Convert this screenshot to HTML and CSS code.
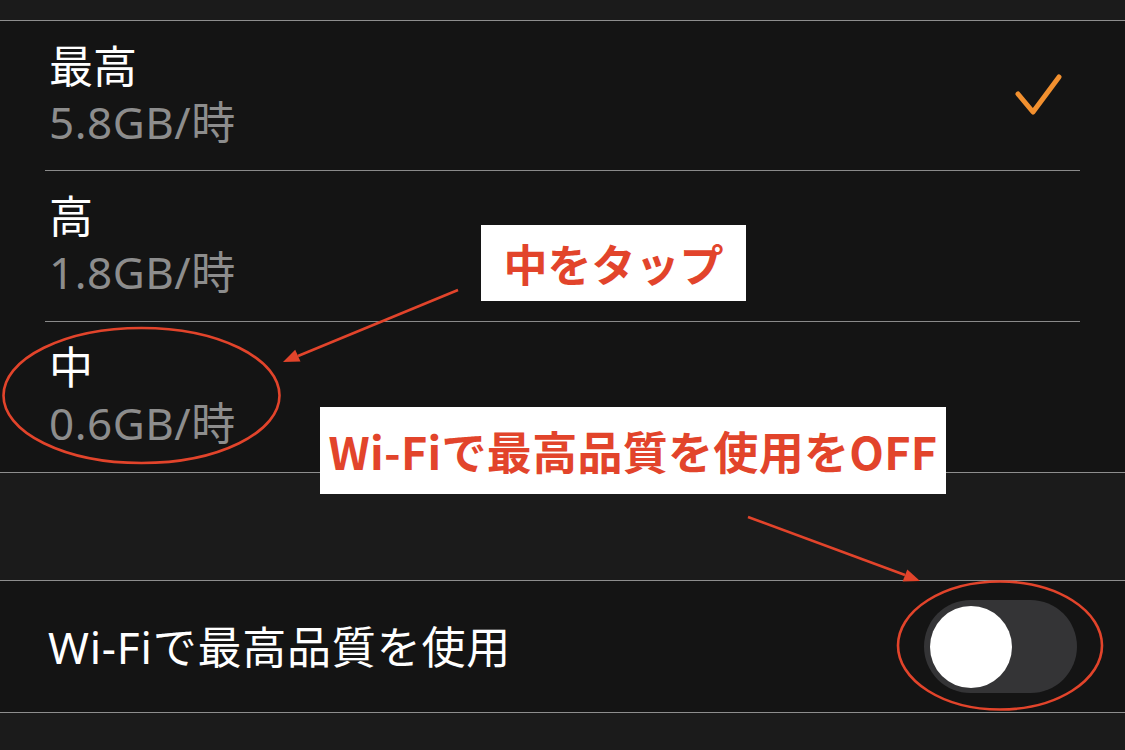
FILE: index.html
```html
<!DOCTYPE html>
<html lang="ja">
<head>
    <meta charset="UTF-8">
    <title>ストリーミング画質</title>
    <link rel="stylesheet" href="styles.css">
</head>
<body>
    <div class="screen">
        <div class="top-gap"></div>

        <div class="quality-list">
            <div class="option">
                <div class="option-text">
                    <div class="option-title">最高</div>
                    <div class="option-sub">5.8GB/時</div>
                </div>
                <svg class="check" width="50" height="50" viewBox="0 0 50 50">
                    <path d="M4 24 L19 42 L45 7" fill="none" stroke="#f2902f" stroke-width="5" stroke-linecap="round" stroke-linejoin="round"/>
                </svg>
            </div>
            <div class="option">
                <div class="option-text">
                    <div class="option-title">高</div>
                    <div class="option-sub">1.8GB/時</div>
                </div>
            </div>
            <div class="option last">
                <div class="option-text">
                    <div class="option-title">中</div>
                    <div class="option-sub">0.6GB/時</div>
                </div>
            </div>
        </div>

        <div class="section-gap"></div>

        <div class="setting-row">
            <span class="setting-label">Wi-Fiで最高品質を使用</span>
            <div class="toggle">
                <div class="knob"></div>
            </div>
        </div>

        <div class="bottom-gap"></div>

        <!-- annotations drawn over the screenshot -->
        <div class="note note-tap">中をタップ</div>
        <div class="note note-off">Wi-Fiで最高品質を使用をOFF</div>

        <svg class="marks" width="1125" height="750" viewBox="0 0 1125 750">
            <g fill="none" stroke="#e2442b" stroke-width="2.6">
                <ellipse cx="141.5" cy="395.5" rx="138" ry="67.5"/>
                <ellipse cx="1000" cy="645.5" rx="102" ry="64"/>
                <line x1="458" y1="290" x2="298" y2="356"/>
                <line x1="748" y1="517" x2="905" y2="575"/>
            </g>
            <g fill="#e2442b">
                <polygon points="283,362 300.5,361.6 295.2,349.8"/>
                <polygon points="920,581 902.6,581.4 907.3,569.4"/>
            </g>
        </svg>
    </div>
</body>
</html>
```

FILE: styles.css
```css
* { margin: 0; padding: 0; box-sizing: border-box; }
body {
    font-family: "Noto Sans", "Noto Sans CJK JP", sans-serif;
    background: #1b1b1b;
    color: #ffffff;
}
.screen {
    position: relative;
    width: 1125px;
    height: 750px;
    overflow: hidden;
    background: #1b1b1b;
}
.top-gap {
    height: 21px;
    border-bottom: 1px solid #8e8e8e;
}
.quality-list {
    background: #141414;
    border-bottom: 1px solid #8e8e8e;
}
.option {
    display: flex;
    align-items: center;
    justify-content: space-between;
    height: 151px;
    margin: 0 45px;
    padding: 0 0 0 4px;
    border-bottom: 1px solid #8a8a8a;
}
.option:first-child { height: 150px; }
.option.last { height: 150px; border-bottom: none; }
.option-text { margin-top: -4px; }
.option-title {
    font-size: 44px;
    line-height: 56px;
    color: #ffffff;
}
.option-sub {
    font-size: 44px;
    line-height: 56px;
    color: #8d8d8d;
    letter-spacing: 0.5px;
}
.check { margin-right: 16px; margin-bottom: 2px; }
.section-gap {
    height: 108px;
    border-bottom: 1px solid #8e8e8e;
}
.setting-row {
    display: flex;
    align-items: center;
    justify-content: space-between;
    height: 132px;
    padding: 0 48px 0 48px;
    background: #141414;
    border-bottom: 1px solid #8e8e8e;
}
.setting-label {
    font-size: 44px;
    color: #ffffff;
    letter-spacing: 0.8px;
    margin-top: -4px;
}
.toggle {
    display: flex;
    align-items: center;
    width: 153px;
    height: 93px;
    padding: 0 6px;
    border-radius: 47px;
    background: #343436;
}
.knob {
    width: 82px;
    height: 82px;
    border-radius: 50%;
    background: #ffffff;
}
.bottom-gap { height: 37px; }

.note {
    position: absolute;
    display: flex;
    align-items: center;
    justify-content: center;
    background: #ffffff;
    color: #e2442b;
    font-family: "Noto Sans CJK JP", sans-serif;
    font-weight: 700;
    font-size: 44px;
    white-space: nowrap;
}
.note-tap {
    left: 481px;
    top: 225px;
    width: 265px;
    height: 76px;
}
.note-off {
    left: 320px;
    top: 407px;
    width: 626px;
    height: 87px;
    font-size: 45px;
    letter-spacing: 0.3px;
}
.marks {
    position: absolute;
    left: 0;
    top: 0;
    pointer-events: none;
}
```
